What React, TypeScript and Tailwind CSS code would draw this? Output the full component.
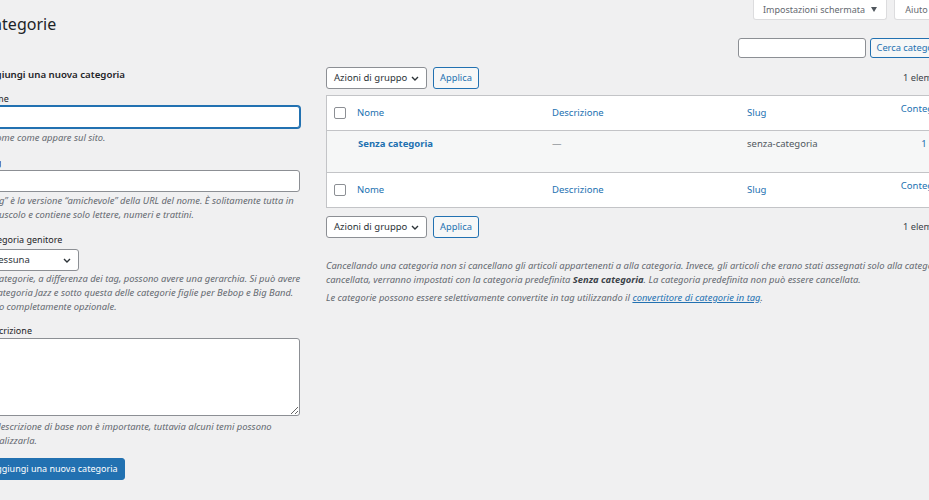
import React from "react";

function Chevron() {
  return (
    <svg width="8" height="5" viewBox="0 0 8 5" className="shrink-0">
      <path d="M1 1l3 3 3-3" fill="none" stroke="#2c3338" strokeWidth="1.4" />
    </svg>
  );
}

function SelectBox({ label, width }: { label: string; width: string }) {
  return (
    <div
      className={`${width} h-[22px] flex items-center justify-between pl-[7px] pr-[7px] bg-white border border-[#8c8f94] rounded-[3px] text-[9.5px] text-[#2c3338]`}
    >
      <span>{label}</span>
      <Chevron />
    </div>
  );
}

function SecondaryButton({ children, width }: { children: React.ReactNode; width: string }) {
  return (
    <div
      className={`${width} h-[22px] flex items-center justify-center bg-[#f6f7f7] border border-[#2271b1] rounded-[3px] text-[9.3px] text-[#2271b1]`}
    >
      {children}
    </div>
  );
}

function Checkbox() {
  return <div className="w-[12px] h-[12px] bg-white border border-[#8c8f94] rounded-[2px]" />;
}

function TableNav() {
  return (
    <div className="flex items-center justify-between">
      <div className="flex items-center gap-[6px]">
        <SelectBox label="Azioni di gruppo" width="w-[101px]" />
        <SecondaryButton width="w-[46px]">Applica</SecondaryButton>
      </div>
      <span className="text-[9.3px] text-[#3c434a] pr-[2px]">1 elementi</span>
    </div>
  );
}

const cols = "grid grid-cols-[24px_195px_195px_157px_1fr]";

function HeadRow({ top }: { top: boolean }) {
  return (
    <div
      className={`${cols} h-[35px] items-center bg-white text-[9.5px] text-[#2271b1] ${
        top ? "border-b border-[#c3c4c7]" : "border-t border-[#c3c4c7]"
      }`}
    >
      <div className="pl-[7px]">
        <Checkbox />
      </div>
      <div className="pl-[6px]">Nome</div>
      <div className="pl-[6px]">Descrizione</div>
      <div className="pl-[6px]">Slug</div>
      <div className="text-center mb-[8px]">Conteggio</div>
    </div>
  );
}

export default function App() {
  return (
    <div className="w-[929px] h-[500px] overflow-hidden bg-[#f0f0f1] font-['Noto_Sans',sans-serif] text-[#3c434a]">
      <div className="ml-[-17px] w-[968px]">
        {/* header */}
        <div className="flex justify-between items-start">
          <h1 className="mt-[13px] text-[16px] leading-[22px] text-[#1d2327] font-normal">Categorie</h1>
          <div className="flex flex-col items-end">
            <div className="flex gap-[7px]">
              <div className="w-[134px] h-[20px] flex items-center justify-center gap-[6px] bg-white border border-t-0 border-[#dcdcde] rounded-b-[3px] text-[9px] text-[#646970]">
                <span>Impostazioni schermata</span>
                <svg width="6" height="5" viewBox="0 0 6 5">
                  <path d="M0 0h6L3 5z" fill="#50575e" />
                </svg>
              </div>
              <div className="w-[57px] h-[20px] flex items-center justify-center gap-[6px] bg-white border border-t-0 border-[#dcdcde] rounded-b-[3px] text-[9px] text-[#646970]">
                <span>Aiuto</span>
                <svg width="6" height="5" viewBox="0 0 6 5">
                  <path d="M0 0h6L3 5z" fill="#50575e" />
                </svg>
              </div>
            </div>
            <div className="mt-[18px] flex gap-[4px]">
              <input className="w-[128px] h-[20px] bg-white border border-[#8c8f94] rounded-[3px]" />
              <SecondaryButton width="w-[81px] !h-[20px]">Cerca categorie</SecondaryButton>
            </div>
          </div>
        </div>

        {/* columns */}
        <div className="flex gap-[26px]">
          {/* left */}
          <div className="w-[317px] shrink-0 text-[9px]">
            <h2 className="mt-[10px] text-[9.7px] leading-[14px] font-semibold text-[#1d2327]">
              Aggiungi una nuova categoria
            </h2>

            <div className="mt-[11px] leading-[12px] text-[#1d2327]">Nome</div>
            <input className="mt-[1px] block w-full h-[22px] bg-white border border-[#2271b1] shadow-[0_0_0_1px_#2271b1] rounded-[3px]" />
            <p className="mt-[3px] leading-[14px] italic text-[9.4px] text-[#646970] whitespace-nowrap">Il nome come appare sul sito.</p>

            <div className="mt-[12px] leading-[12px] text-[#1d2327]">Slug</div>
            <input className="mt-[1px] block w-full h-[22px] bg-white border border-[#8c8f94] rounded-[3px]" />
            <p className="mt-[2px] leading-[14px] italic text-[9.4px] text-[#646970] whitespace-nowrap">
              “Slug” è la versione “amichevole” della URL del nome. È solitamente tutta in
              <br />
              minuscolo e contiene solo lettere, numeri e trattini.
            </p>

            <div className="mt-[12px] leading-[12px] text-[#1d2327]">Categoria genitore</div>
            <div className="mt-[3px]">
              <SelectBox label="Nessuna" width="w-[96px]" />
            </div>
            <p className="mt-[1px] leading-[14px] italic text-[9.4px] text-[#646970] whitespace-nowrap">
              Le categorie, a differenza dei tag, possono avere una gerarchia. Si può avere
              <br />
              la categoria Jazz e sotto questa delle categorie figlie per Bebop e Big Band.
              <br />
              Tutto completamente opzionale.
            </p>

            <div className="mt-[11px] leading-[12px] text-[#1d2327]">Descrizione</div>
            <textarea
              readOnly
              className="mt-[1px] block w-full h-[78px] bg-white border border-[#8c8f94] rounded-[3px]"
            />
            <p className="mt-[4px] leading-[14px] italic text-[9.4px] text-[#646970] whitespace-nowrap">
              La descrizione di base non è importante, tuttavia alcuni temi possono
              <br />
              visualizzarla.
            </p>

            <div className="mt-[10px] w-[142px] h-[22px] flex items-center justify-center bg-[#2271b1] border border-[#2271b1] rounded-[3px] text-white text-[9px]">
              Aggiungi una nuova categoria
            </div>
          </div>

          {/* right */}
          <div className="w-[625px] shrink-0">
            <div className="mt-[9px]">
              <TableNav />
            </div>

            <div className="mt-[6px] border border-[#c3c4c7] bg-white">
              <HeadRow top />
              <div className={`${cols} h-[41px] items-start pt-[6px] bg-[#f6f7f7] text-[9.5px] leading-[14px]`}>
                <div />
                <div className="pl-[7px] font-bold text-[#2271b1]">Senza categoria</div>
                <div className="pl-[6px] text-[#646970]">—</div>
                <div className="pl-[6px] text-[#50575e]">senza-categoria</div>
                <div className="text-center text-[#2271b1]">1</div>
              </div>
              <HeadRow top={false} />
            </div>

            <div className="mt-[8px]">
              <TableNav />
            </div>

            <div className="mt-[21px] text-[9.4px] leading-[14px] italic text-[#646970] whitespace-nowrap">
              <p>
                Cancellando una categoria non si cancellano gli articoli appartenenti a alla categoria. Invece, gli articoli che erano stati assegnati solo alla categoria
                <br />
                cancellata, verranno impostati con la categoria predefinita{" "}
                <strong className="text-[#3c434a]">Senza categoria</strong>. La categoria predefinita non può essere cancellata.
              </p>
              <p className="mt-[4px]">
                Le categorie possono essere selettivamente convertite in tag utilizzando il{" "}
                <span className="text-[#2271b1] underline">convertitore di categorie in tag</span>.
              </p>
            </div>
          </div>
        </div>
      </div>
    </div>
  );
}
